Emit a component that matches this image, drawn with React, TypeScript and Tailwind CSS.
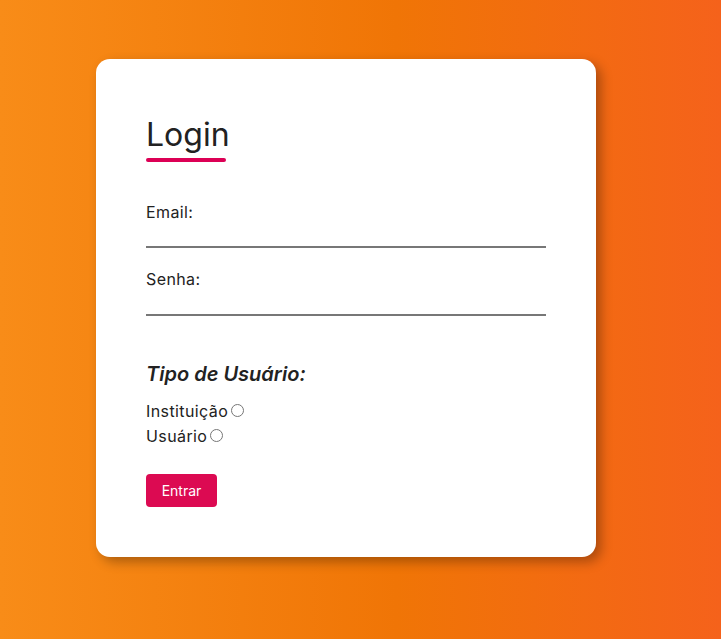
export default function App() {
  return (
    <main
      className="min-h-[639px] w-full bg-[linear-gradient(to_right,#f88c18,#f07506_55%,#f5621b)] pt-[59px] pl-[96px] pb-[81px]"
      style={{ fontFamily: 'Inter, "Noto Sans", sans-serif' }}
    >
      {/* ── CARD ─────────────────────────────────────────── */}
      <div className="w-[500px] rounded-[14px] bg-white p-[50px] shadow-[5px_5px_12px_rgba(0,0,0,0.3)] text-[#222]">
        <h1 className="pt-[2px] text-[32px] leading-[48px] font-normal">Login</h1>
        <div className="-mt-[1px] h-1 w-20 rounded-full bg-[#dc0055]"></div>

        <form className="mt-[38px] flex flex-col">
          <label className="text-[16px] leading-6 tracking-[0.4px]">Email:</label>
          <input type="email" className="h-6 w-[400px] border-b-2 border-[#777] outline-none" />

          <label className="mt-[19px] text-[16px] leading-6 tracking-[0.4px]">Senha:</label>
          <input type="password" className="h-[25px] w-[400px] border-b-2 border-[#777] outline-none" />

          <h2 className="mt-[43px] text-[20px] leading-[30px] font-semibold italic">Tipo de Usuário:</h2>
          <div className="mt-[10px] flex flex-col">
            {["Instituição", "Usuário"].map((label) => (
              <label key={label} className="flex items-center gap-[3px] text-[16px] leading-[25px] tracking-[0.4px]">
                {label}
                <input type="radio" name="tipo" className="m-0 h-[13px] w-[13px] -translate-y-[1px]" />
              </label>
            ))}
          </div>

          <button
            type="button"
            className="mt-[25px] h-[33px] w-[71px] rounded-[4px] bg-[#dc0a52] text-[14px] text-white"
          >
            Entrar
          </button>
        </form>
      </div>
    </main>
  );
}
